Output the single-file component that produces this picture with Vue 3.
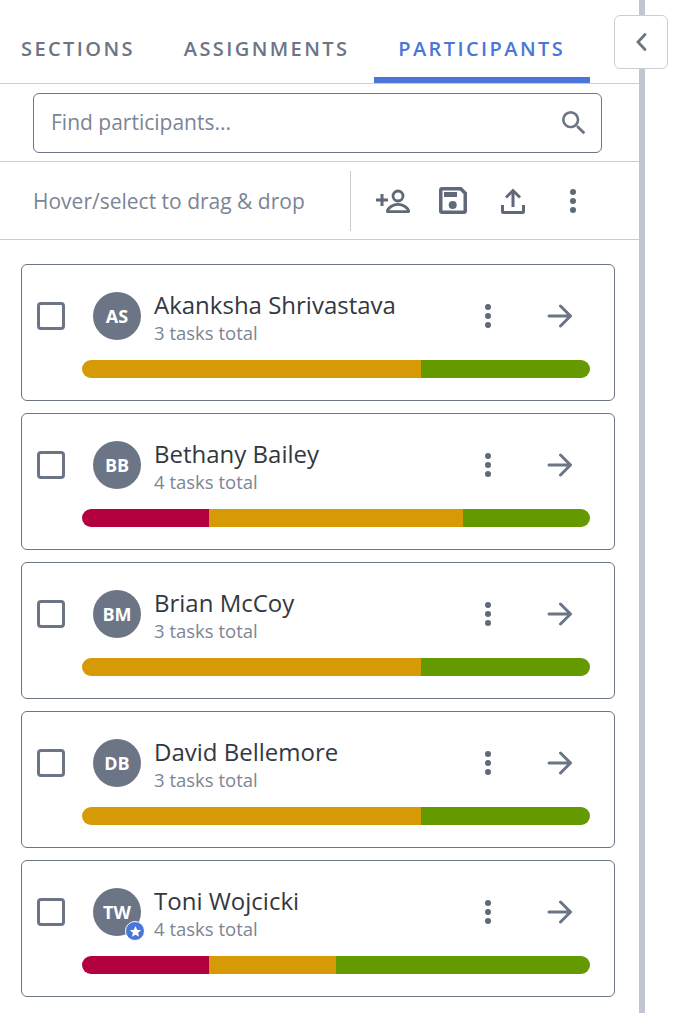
<script setup>
const tabs = [
  { label: 'SECTIONS', active: false },
  { label: 'ASSIGNMENTS', active: false },
  { label: 'PARTICIPANTS', active: true },
]
const people = [
  { initials: 'AS', name: 'Akanksha Shrivastava', tasks: 3, bar: [0, 2, 1] },
  { initials: 'BB', name: 'Bethany Bailey', tasks: 4, bar: [1, 2, 1] },
  { initials: 'BM', name: 'Brian McCoy', tasks: 3, bar: [0, 2, 1] },
  { initials: 'DB', name: 'David Bellemore', tasks: 3, bar: [0, 2, 1] },
  { initials: 'TW', name: 'Toni Wojcicki', tasks: 4, bar: [1, 1, 2], star: true },
]
const segClasses = ['red', 'gold', 'green']
const pct = (bar, i) => (bar[i] / bar.reduce((a, b) => a + b, 0)) * 100 + '%'
</script>

<template>
  <div class="page">
    <aside class="panel">
      <nav class="tabs">
        <div v-for="t in tabs" :key="t.label" class="tab" :class="{ active: t.active }">{{ t.label }}</div>
      </nav>

      <div class="search-row">
        <div class="search">
          <span class="placeholder">Find participants...</span>
          <svg class="search-icon" viewBox="0 0 24 24" width="32" height="32">
            <path fill="currentColor" d="M15.5 14h-.79l-.28-.27A6.47 6.47 0 0 0 16 9.5 6.5 6.5 0 1 0 9.5 16c1.61 0 3.09-.59 4.23-1.57l.27.28v.79l5 4.99L20.49 19l-4.99-5zm-6 0C7.01 14 5 11.99 5 9.5S7.01 5 9.5 5 14 7.01 14 9.5 11.99 14 9.5 14z"/>
          </svg>
        </div>
      </div>

      <div class="toolbar">
        <span class="hint">Hover/select to drag &amp; drop</span>
        <div class="tools">
          <svg class="tool" viewBox="0 0 36 30" width="36" height="30">
            <path fill="currentColor" d="M1 12.500h4.500V8h3v4.500H13v3H8.500V20h-3v-4.500H1z"/>
            <circle cx="23" cy="10" r="5" fill="none" stroke="currentColor" stroke-width="2.8"/>
            <path fill="none" stroke="currentColor" stroke-width="2.8" stroke-linejoin="round" d="M12.400 25.600c0-4 6-7.200 10.600-7.200s10.600 3.200 10.600 7.200z"/>
          </svg>
          <svg class="tool" viewBox="0 0 30 30" width="30" height="30">
            <path fill="currentColor" fill-rule="evenodd" d="M4 1h19.500L29 6.500V25a3 3 0 0 1-3 3H4a3 3 0 0 1-3-3V4a3 3 0 0 1 3-3zM4.500 4.500v20h21V8L22 4.500zM6 6h13v5H6z"/>
            <circle cx="14.700" cy="19" r="4" fill="currentColor"/>
          </svg>
          <svg class="tool" viewBox="0 0 30 30" width="30" height="30">
            <path fill="currentColor" d="M15 2.500l8 8-2 2-4.500-4.500V21h-3V8L9 12.500l-2-2zM3 19h3v6h18v-6h3v6.500a2.500 2.500 0 0 1-2.500 2.500h-19A2.500 2.500 0 0 1 3 25.500z"/>
          </svg>
          <svg class="tool kebab" viewBox="0 0 8 24" width="8" height="24">
            <circle cx="4" cy="3" r="3" fill="currentColor"/>
            <circle cx="4" cy="12" r="3" fill="currentColor"/>
            <circle cx="4" cy="21" r="3" fill="currentColor"/>
          </svg>
        </div>
      </div>

      <ul class="list">
        <li v-for="p in people" :key="p.initials" class="card">
          <div class="card-top">
            <span class="check"></span>
            <div class="avatar">
              {{ p.initials }}
              <span v-if="p.star" class="badge">
                <svg viewBox="0 0 24 24" width="13" height="13">
                  <path fill="#fff" d="M12 2l3 6.800 7.400.7-5.600 4.900 1.700 7.300L12 17.900l-6.500 3.800 1.700-7.300L1.600 9.500 9 8.800z"/>
                </svg>
              </span>
            </div>
            <div class="info">
              <div class="name">{{ p.name }}</div>
              <div class="sub">{{ p.tasks }} tasks total</div>
            </div>
            <svg class="kebab-small" viewBox="0 0 8 24" width="8" height="24">
              <circle cx="4" cy="3" r="3" fill="currentColor"/>
              <circle cx="4" cy="12" r="3" fill="currentColor"/>
              <circle cx="4" cy="21" r="3" fill="currentColor"/>
            </svg>
            <svg class="arrow" viewBox="0 0 26 24" width="26" height="24">
              <path fill="none" stroke="currentColor" stroke-width="3" stroke-linecap="round" stroke-linejoin="round" d="M2 12h21M13.500 2l10 10-10 10"/>
            </svg>
          </div>
          <div class="bar">
            <template v-for="(n, i) in p.bar" :key="i">
              <span v-if="n" class="seg" :class="segClasses[i]" :style="{ width: pct(p.bar, i) }"></span>
            </template>
          </div>
        </li>
      </ul>
    </aside>

    <button class="collapse" type="button" aria-label="Collapse">
      <svg viewBox="0 0 14 20" width="14" height="20">
        <path fill="none" stroke="currentColor" stroke-width="2.800" stroke-linecap="round" d="M11 2.500L4 10l7 7.500"/>
      </svg>
    </button>
  </div>
</template>

<style scoped>
.page {
  position: relative;
  width: 674px;
  height: 1013px;
  overflow: hidden;
  background: #fff;
  font-family: "Open Sans", "Noto Sans", sans-serif;
  color: #6b7585;
}
.panel {
  width: 645px;
  height: 100%;
  box-sizing: border-box;
  border-right: 6px solid #bfc6cf;
}
.tabs {
  display: flex;
  height: 84px;
  box-sizing: border-box;
  border-bottom: 1px solid #c9ccd2;
}
.tab {
  height: 83px;
  box-sizing: border-box;
  padding: 35px 24.5px 0;
  font-size: 20px;
  line-height: 27px;
  font-weight: 600;
  letter-spacing: 2.4px;
  white-space: nowrap;
}
.tab:first-child {
  padding-left: 21px;
}
.tab.active {
  color: #4a76d9;
  border-bottom: 6px solid #4a76d9;
}
.search-row {
  height: 78px;
  box-sizing: border-box;
  padding: 9px 37px 0 33px;
  border-bottom: 1px solid #c9ccd2;
}
.search {
  display: flex;
  align-items: center;
  justify-content: space-between;
  height: 60px;
  box-sizing: border-box;
  padding: 0 11px 0 17px;
  border: 1px solid #6b7585;
  border-radius: 6px;
}
.placeholder {
  font-size: 21px;
  color: #7c8595;
  margin-top: -3px;
}
.search-icon {
  color: #6b7585;
}
.toolbar {
  display: flex;
  align-items: center;
  height: 78px;
  box-sizing: border-box;
  padding-left: 33px;
  border-bottom: 1px solid #c9ccd2;
}
.hint {
  width: 317px;
  height: 60px;
  line-height: 60px;
  font-size: 21px;
  color: #7c8595;
  border-right: 1px solid #c9ccd2;
  white-space: nowrap;
}
.tools {
  display: flex;
  align-items: center;
  padding-left: 24px;
}
.tool {
  color: #5f6978;
  flex: none;
}
.tool:nth-child(1) { margin-right: 27px; }
.tool:nth-child(2) { margin-right: 30px; }
.tool:nth-child(3) { margin-right: 41px; }
.list {
  list-style: none;
  margin: 24px 0 0;
  padding: 0 24px 0 21px;
  display: flex;
  flex-direction: column;
  gap: 12px;
}
.card {
  height: 137px;
  box-sizing: border-box;
  border: 1px solid #6b7585;
  border-radius: 6px;
  padding: 27px 24px 0 60px;
}
.card-top {
  position: relative;
  display: flex;
  align-items: center;
  height: 48px;
  padding-left: 11px;
}
.check {
  position: absolute;
  left: -45px;
  top: 10px;
  width: 28px;
  height: 28px;
  box-sizing: border-box;
  border: 3.500px solid #6b7585;
  border-radius: 4px;
}
.avatar {
  position: relative;
  flex: none;
  width: 48px;
  height: 48px;
  border-radius: 50%;
  background: #6b7585;
  color: #fff;
  font-size: 18px;
  font-weight: 700;
  line-height: 48px;
  text-align: center;
}
.badge {
  position: absolute;
  right: -4px;
  bottom: -5px;
  width: 20px;
  height: 20px;
  box-sizing: border-box;
  border-radius: 50%;
  background: #4a76d9;
  border: 1px solid #fff;
  display: flex;
  align-items: center;
  justify-content: center;
}
.info {
  flex: 1;
  align-self: flex-start;
  margin: -2px 0 0 13px;
  min-width: 0;
}
.name {
  font-size: 24px;
  line-height: 30px;
  color: #33383f;
  white-space: nowrap;
}
.sub {
  font-size: 18.5px;
  line-height: 24px;
  margin-top: 1px;
  color: #7c8595;
}
.kebab-small {
  flex: none;
  color: #5f6978;
  margin-right: 55px;
}
.arrow {
  flex: none;
  color: #6b7585;
  margin-right: 17px;
}
.bar {
  display: flex;
  height: 18px;
  width: 508px;
  margin: 20px 0 0;
  border-radius: 9px;
  overflow: hidden;
}
.seg { display: block; height: 100%; }
.red { background: #b30040; }
.gold { background: #d79a07; }
.green { background: #659900; }
.collapse {
  position: absolute;
  left: 614px;
  top: 15px;
  width: 54px;
  height: 54px;
  padding: 0;
  background: #fff;
  border: 1px solid #c9ced5;
  border-radius: 6px;
  color: #6b7585;
  display: flex;
  align-items: center;
  justify-content: center;
}
</style>
